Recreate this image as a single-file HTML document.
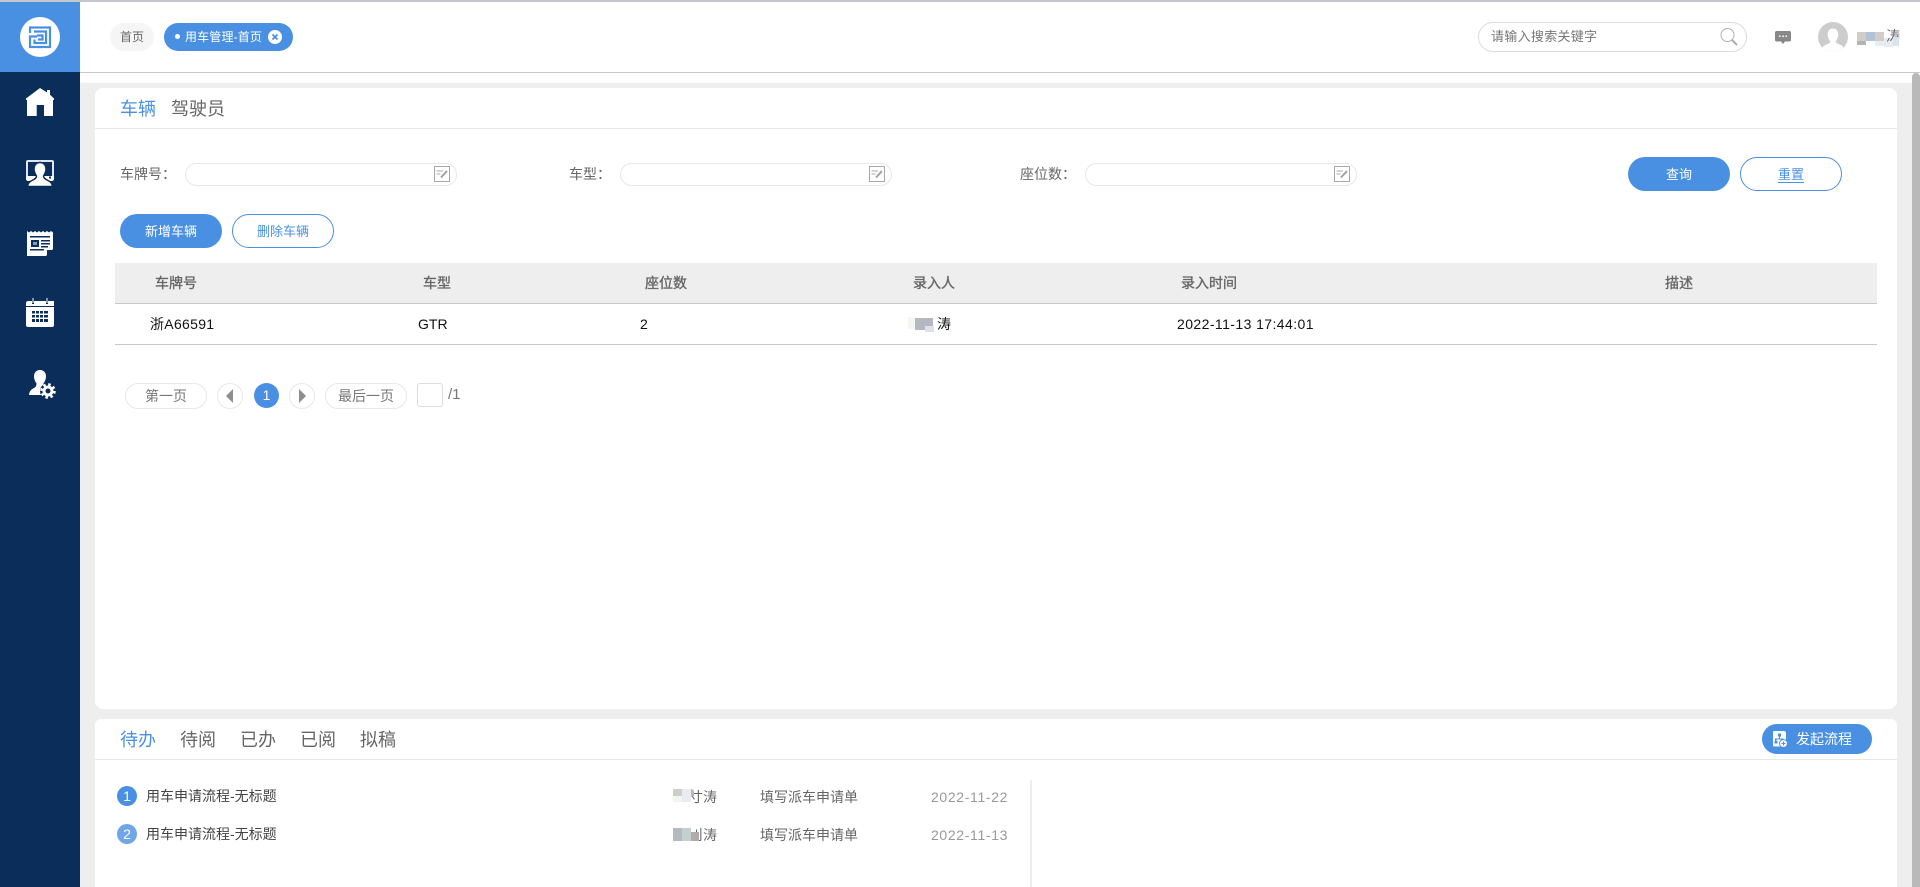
<!DOCTYPE html>
<html lang="zh-CN">
<head>
<meta charset="utf-8">
<title>用车管理-首页</title>
<style>
*{box-sizing:border-box}
html,body{margin:0;padding:0;width:1920px;height:887px;overflow:hidden;background:#fff;font-family:"Liberation Sans","Noto Sans CJK SC",sans-serif}
.a{position:absolute}
.t{position:absolute;white-space:nowrap;line-height:20px;font-size:14px;color:#666}
.h{-webkit-text-stroke:.35px #666}
.pill{position:absolute;border-radius:17px}
.inp{position:absolute;width:272px;height:23px;border:1.5px solid #e8e8e8;border-radius:12px;background:#fff}
.btn{position:absolute;width:102px;height:34px;border-radius:17px;text-align:center;line-height:36px;font-size:13px}
.b1{background:#4a90e2;color:#fff}
.b2{background:#fff;border:1px solid #4a90e2;color:#4a90e2;line-height:34px}
.pg{position:absolute;height:26px;border:1px solid #e8e8e8;border-radius:13px;background:#fff;text-align:center;line-height:24px;font-size:14px;color:#777}
.m{position:absolute}
</style>
</head>
<body>
<div class="a" style="left:0;top:0;width:1920px;height:2px;background:#c4c8cc"></div>

<!-- Sidebar -->
<div class="a" style="left:0;top:2px;width:80px;height:70px;background:#4a90e2"></div>
<div class="a" style="left:0;top:72px;width:80px;height:815px;background:#0a2d5a"></div>
<svg class="a" style="left:0;top:0" width="80" height="420" viewBox="0 0 80 420">
  <circle cx="40" cy="37" r="20" fill="#fff"/>
  <path d="M30 33V27.500H50V47H30V36.500H37M34 31.500H46V43H34.500V39.500M38 39.500H42.500V35.500H37" fill="none" stroke="#4a90e2" stroke-width="2.200"/>
  <path fill="#fff" fill-rule="evenodd" d="M40 88L47 92.500V90H50V94.800L54 98.500V100H53V116H44V105H36.700V116H27V100H26V98.500Z"/>
  <rect x="27" y="161" width="26" height="18" rx="1" fill="none" stroke="#dfe6ee" stroke-width="2"/>
  <path fill="#fff" d="M26 176H54V179C54 180 53 181 52 181H28C27 181 26 180 26 179Z"/>
  <path fill="#fff" stroke="#0a2d5a" stroke-width="1.500" d="M40 162.500C44 162.500 46 165.500 46 169C46 172 44.500 174.500 43.500 176C43.500 178 45 179 48 180.500C50.500 181.700 52 183 52.500 186.500H27.500C28 183 29.500 181.700 32 180.500C35 179 36.500 178 36.500 176C35.500 174.500 34 172 34 169C34 165.500 36 162.500 40 162.500Z"/>
  <rect x="49" y="176.500" width="2" height="2" fill="#0a2d5a"/>
  <path fill="#fff" d="M27 231L29 232.500L31 231L33 232.500L35 231L37 232.500L39 231L41 232.500L43 231L45 232.500L47 231L49 232.500L51 231L53 232.500V249L46 256H27Z"/>
  <path fill="#0a2d5a" d="M30 236H50V237.500H30ZM31 240H39V247H31ZM41 240H50V241.500H41ZM41 243H50V244.500H41ZM41 246H48V247.500H41ZM30 249H44V250.500H30ZM53 250L47 256V250Z"/>
  <rect x="33" y="242" width="4" height="3" fill="#7f9bbb"/>
  <path fill="#fff" d="M28 301H54V325C54 326.500 53 327 52 327H28C27 327 26 326.500 26 325V303C26 302 27 301 28 301Z"/>
  <rect x="26" y="306" width="28" height="1" fill="#0a2d5a"/>
  <rect x="32" y="298" width="2" height="6" fill="#0a2d5a"/><rect x="32.500" y="298" width="1" height="5" fill="#fff"/>
  <rect x="46" y="298" width="2" height="6" fill="#0a2d5a"/><rect x="46.500" y="298" width="1" height="5" fill="#fff"/>
  <path fill="#0a2d5a" d="M32 311h3v2.500h-3zM36 311h3v2.500h-3zM40 311h3v2.500h-3zM44 311h4v2.500h-4zM32 315h3v2.500h-3zM36 315h3v2.500h-3zM40 315h3v2.500h-3zM44 315h4v2.500h-4zM32 319h3v3h-3zM36 319h3v3h-3zM40 319h3v3h-3zM44 319h4v3h-4z"/>
  <path fill="#fff" d="M40 370C44 370 46 373 46 376.500C46 379.500 44.500 382 43.500 383.500V386L41 395H29C29.500 391 31 389.500 34 388C36 387 36.500 385.500 36.500 383.500C35.500 382 34 379.500 34 376.500C34 373 36 370 40 370Z"/>
  <circle cx="48" cy="391" r="8" fill="#0a2d5a"/>
  <circle cx="48" cy="391" r="4" fill="none" stroke="#fff" stroke-width="3"/>
  <circle cx="48" cy="391" r="6.500" fill="none" stroke="#fff" stroke-width="2.500" stroke-dasharray="2.550 2.550"/>
</svg>

<!-- Header -->
<div class="a" style="left:80px;top:72px;width:1840px;height:1px;background:#c8c8c8"></div>
<div class="pill" style="left:110px;top:23px;width:44px;height:28px;background:#f5f5f5"></div>
<div class="t" style="left:120px;top:27px;font-size:12px;color:#666">首页</div>
<div class="pill" style="left:164px;top:23px;width:129px;height:28px;background:#4a90e2"></div>
<div class="a" style="left:175px;top:34px;width:5px;height:5px;border-radius:50%;background:#fff"></div>
<div class="t" style="left:185px;top:27px;font-size:12px;letter-spacing:.15px;color:#fff">用车管理-首页</div>
<svg class="a" style="left:268px;top:30px" width="14" height="14" viewBox="0 0 14 14"><circle cx="7" cy="7" r="7" fill="#fff"/><path d="M4.500 4.500L9.500 9.500M9.500 4.500L4.500 9.500" stroke="#4a90e2" stroke-width="1.800"/></svg>

<div class="a" style="left:1478px;top:22px;width:269px;height:30px;border:1px solid #dcdcdc;border-radius:15px"></div>
<div class="t" style="left:1491px;top:27px;font-size:13px;letter-spacing:.3px;color:#777">请输入搜索关键字</div>
<svg class="a" style="left:1720px;top:27px" width="18" height="19" viewBox="0 0 18 19"><circle cx="7.500" cy="8" r="6.500" fill="none" stroke="#b0b0b0" stroke-width="1"/><path d="M12 13L17 18" stroke="#a5a5a5" stroke-width="1.800"/></svg>
<svg class="a" style="left:1775px;top:30px" width="16" height="15" viewBox="0 0 16 15"><path d="M1.500 1H14.500C15.300 1 16 1.700 16 2.500V10C16 10.800 15.300 11.500 14.500 11.500H10L8 14L6 11.500H1.500C.7 11.500 0 10.800 0 10V2.500C0 1.700.7 1 1.500 1Z" fill="#888"/><rect x="4" y="5.500" width="1.500" height="1.500" fill="#fff"/><rect x="7.300" y="5.500" width="1.500" height="1.500" fill="#fff"/><rect x="10.500" y="5.500" width="1.500" height="1.500" fill="#fff"/></svg>
<svg class="a" style="left:1818px;top:22px" width="30" height="30" viewBox="0 0 30 30"><circle cx="15" cy="15" r="15" fill="#cdcdcd"/><path d="M15 6.500C18.500 6.500 20.300 9.300 20.300 12.500C20.300 15.500 18.800 18 17.700 19.300C17.700 21 19.500 21.700 22 22.700C24 23.500 25 24.500 25.500 25.500C23 28.300 19.300 30 15 30C10.700 30 7 28.300 4.500 25.500C5 24.500 6 23.500 8 22.700C10.500 21.700 12.300 21 12.300 19.300C11.200 18 9.700 15.500 9.700 12.500C9.700 9.300 11.500 6.500 15 6.500Z" fill="#fff"/></svg>
<div class="m" style="left:1857px;top:32px;width:9px;height:9px;background:#d3cbc8"></div>
<div class="m" style="left:1857px;top:41px;width:9px;height:4px;background:#b0b6b4"></div>
<div class="m" style="left:1866px;top:32px;width:9px;height:9px;background:#b3c3d5"></div>
<div class="m" style="left:1875px;top:32px;width:9px;height:9px;background:#d3cdc9"></div>
<div class="m" style="left:1875px;top:41px;width:9px;height:5px;background:#e9edf0"></div>
<div class="m" style="left:1884px;top:38px;width:9px;height:9px;background:#e6ecef"></div>
<div class="t" style="left:1886px;top:26px;color:#667">涛</div>
<div class="m" style="left:1884px;top:32px;width:6px;height:6px;background:#fff"></div>
<div class="m" style="left:1893px;top:37px;width:6px;height:9px;background:#dbe4ea"></div>

<!-- Page background -->
<div class="a" style="left:80px;top:83px;width:1832px;height:804px;background:#eee"></div>
<div class="a" style="left:1912px;top:73px;width:8px;height:814px;background:#b9b9b9;border-radius:4px 4px 0 0"></div>
<div class="a" style="left:95px;top:88px;width:1802px;height:621px;background:#fff;border-radius:8px"></div>
<div class="a" style="left:95px;top:719px;width:1802px;height:168px;background:#fff;border-radius:6px 6px 0 0"></div>

<!-- Tabs -->
<div class="a" style="left:95px;top:128px;width:1802px;height:1px;background:#e6e6e6"></div>
<div class="t" style="left:120px;top:99px;font-size:18px;color:#4a90e2">车辆</div>
<div class="t" style="left:171px;top:99px;font-size:18px;color:#666">驾驶员</div>

<!-- Form -->
<div class="t" style="left:120px;top:164px">车牌号：</div>
<div class="inp" style="left:185px;top:163px"></div>
<div class="t" style="left:569px;top:164px">车型：</div>
<div class="inp" style="left:620px;top:163px"></div>
<div class="t" style="left:1020px;top:164px">座位数：</div>
<div class="inp" style="left:1085px;top:163px"></div>
<svg class="a" style="left:434px;top:166px" width="16" height="16" viewBox="0 0 16 16"><rect x=".5" y=".5" width="15" height="15" fill="#fff" stroke="#a8a8a8"/><path d="M2.500 5H9M2.500 8H6.500" stroke="#a8a8a8" stroke-width="1"/><path d="M7 11.500L13 5" stroke="#a0a0a0" stroke-width="2"/></svg>
<svg class="a" style="left:869px;top:166px" width="16" height="16" viewBox="0 0 16 16"><rect x=".5" y=".5" width="15" height="15" fill="#fff" stroke="#a8a8a8"/><path d="M2.500 5H9M2.500 8H6.500" stroke="#a8a8a8" stroke-width="1"/><path d="M7 11.500L13 5" stroke="#a0a0a0" stroke-width="2"/></svg>
<svg class="a" style="left:1334px;top:166px" width="16" height="16" viewBox="0 0 16 16"><rect x=".5" y=".5" width="15" height="15" fill="#fff" stroke="#a8a8a8"/><path d="M2.500 5H9M2.500 8H6.500" stroke="#a8a8a8" stroke-width="1"/><path d="M7 11.500L13 5" stroke="#a0a0a0" stroke-width="2"/></svg>

<div class="btn b1" style="left:1628px;top:157px">查询</div>
<div class="btn b2" style="left:1740px;top:157px"><span style="border-bottom:1px solid #4a90e2;line-height:14px;display:inline-block">重置</span></div>
<div class="btn b1" style="left:120px;top:214px">新增车辆</div>
<div class="btn b2" style="left:232px;top:214px">删除车辆</div>

<!-- Table -->
<div class="a" style="left:115px;top:263px;width:1762px;height:40px;background:#eee"></div>
<div class="a" style="left:115px;top:303px;width:1762px;height:1px;background:#c8c8c8"></div>
<div class="a" style="left:115px;top:344px;width:1762px;height:1px;background:#c8c8c8"></div>
<div class="t h" style="left:155px;top:273px">车牌号</div>
<div class="t h" style="left:423px;top:273px">车型</div>
<div class="t h" style="left:645px;top:273px">座位数</div>
<div class="t h" style="left:913px;top:273px">录入人</div>
<div class="t h" style="left:1181px;top:273px">录入时间</div>
<div class="t h" style="left:1665px;top:273px">描述</div>
<div class="t" style="left:150px;top:314px;color:#111;letter-spacing:.3px">浙A66591</div>
<div class="t" style="left:418px;top:314px;color:#111">GTR</div>
<div class="t" style="left:640px;top:314px;color:#111">2</div>
<div class="m" style="left:908px;top:317px;width:7px;height:12px;background:#f7f5f2"></div>
<div class="m" style="left:915px;top:318px;width:18px;height:12px;background:#b4b8c2"></div>
<div class="m" style="left:925px;top:326px;width:9px;height:6px;background:#dfe1e6"></div>
<div class="t" style="left:937px;top:314px;color:#111">涛</div>
<div class="t" style="left:1177px;top:314px;color:#111;letter-spacing:.42px">2022-11-13 17:44:01</div>

<!-- Pagination -->
<div class="pg" style="left:125px;top:383px;width:82px">第一页</div>
<div class="pg" style="left:217px;top:383px;width:26px"></div>
<svg class="a" style="left:226px;top:389px" width="8" height="14"><path d="M7 0V14L0 7Z" fill="#8e8e8e"/></svg>
<div class="a" style="left:254px;top:383px;width:25px;height:25px;border-radius:50%;background:#4a90e2;color:#fff;text-align:center;line-height:25px;font-size:14px">1</div>
<div class="pg" style="left:289px;top:383px;width:26px"></div>
<svg class="a" style="left:299px;top:389px" width="8" height="14"><path d="M0 0V14L7 7Z" fill="#8e8e8e"/></svg>
<div class="pg" style="left:325px;top:383px;width:82px">最后一页</div>
<div class="a" style="left:417px;top:383px;width:26px;height:24px;border:1px solid #ddd;border-radius:3px"></div>
<div class="t" style="left:448px;top:385px;color:#777;font-size:15px">/1</div>

<!-- Bottom card -->
<div class="a" style="left:95px;top:759px;width:1802px;height:1px;background:#e6e6e6"></div>
<div class="t" style="left:120px;top:730px;font-size:18px;color:#4a90e2">待办</div>
<div class="t" style="left:180px;top:730px;font-size:18px;color:#666">待阅</div>
<div class="t" style="left:240px;top:730px;font-size:18px;color:#666">已办</div>
<div class="t" style="left:300px;top:730px;font-size:18px;color:#666">已阅</div>
<div class="t" style="left:360px;top:730px;font-size:18px;color:#666">拟稿</div>

<div class="pill" style="left:1762px;top:724px;width:110px;height:30px;background:#4a90e2"></div>
<svg class="a" style="left:1773px;top:731px" width="15" height="17" viewBox="0 0 15 17"><path d="M1 0H11C12 0 13 1 13 2V14C13 15 12 15.500 11 15.500H1C.4 15.500 0 15 0 14.500V1C0 .4.4 0 1 0Z" fill="#fff"/><path d="M5 2.500H8V5.500H7V7.500H10.500V10H9V8.500H3.500V10H2V7.500H6V5.500H5ZM1.500 10H4.500V12.500H1.500ZM7.500 10H10V12.500H7.500Z" fill="#4a90e2"/><circle cx="10.500" cy="12.500" r="4" fill="#fff" stroke="#4a90e2"/><path d="M8.500 12.500H12.500M10.500 10.500V14.500" stroke="#4a90e2"/></svg>
<div class="t" style="left:1796px;top:729px;color:#fff">发起流程</div>

<div class="a" style="left:117px;top:786px;width:20px;height:20px;border-radius:50%;background:#4a90e2;color:#fff;text-align:center;line-height:20px;font-size:14px">1</div>
<div class="a" style="left:117px;top:824px;width:20px;height:20px;border-radius:50%;background:#6fa6e8;color:#fff;text-align:center;line-height:20px;font-size:14px">2</div>
<div class="t" style="left:146px;top:786px;color:#444">用车申请流程-无标题</div>
<div class="t" style="left:146px;top:824px;color:#444">用车申请流程-无标题</div>

<div class="t" style="left:689px;top:787px;color:#666">寸涛</div>
<div class="m" style="left:673px;top:789px;width:9px;height:7px;background:#d0ceca"></div>
<div class="m" style="left:673px;top:796px;width:9px;height:6px;background:#f5f5f0"></div>
<div class="m" style="left:682px;top:789px;width:9px;height:13px;background:#e9ecf0"></div>
<div class="m" style="left:691px;top:789px;width:3px;height:7px;background:#bbb6b2;border-radius:0 3px 0 0"></div>
<div class="t" style="left:689px;top:825px;color:#666">刂涛</div>
<div class="m" style="left:673px;top:828px;width:9px;height:13px;background:#b5b9c0"></div>
<div class="m" style="left:682px;top:828px;width:9px;height:13px;background:#c4cfd0"></div>
<div class="m" style="left:691px;top:832px;width:8px;height:9px;background:#b0aca8"></div>
<div class="t" style="left:760px;top:787px;color:#666">填写派车申请单</div>
<div class="t" style="left:760px;top:825px;color:#666">填写派车申请单</div>
<div class="t" style="left:931px;top:787px;color:#999;letter-spacing:.65px">2022-11-22</div>
<div class="t" style="left:931px;top:825px;color:#999;letter-spacing:.65px">2022-11-13</div>
<div class="a" style="left:1030px;top:780px;width:2px;height:107px;background:#eee"></div>
</body>
</html>
